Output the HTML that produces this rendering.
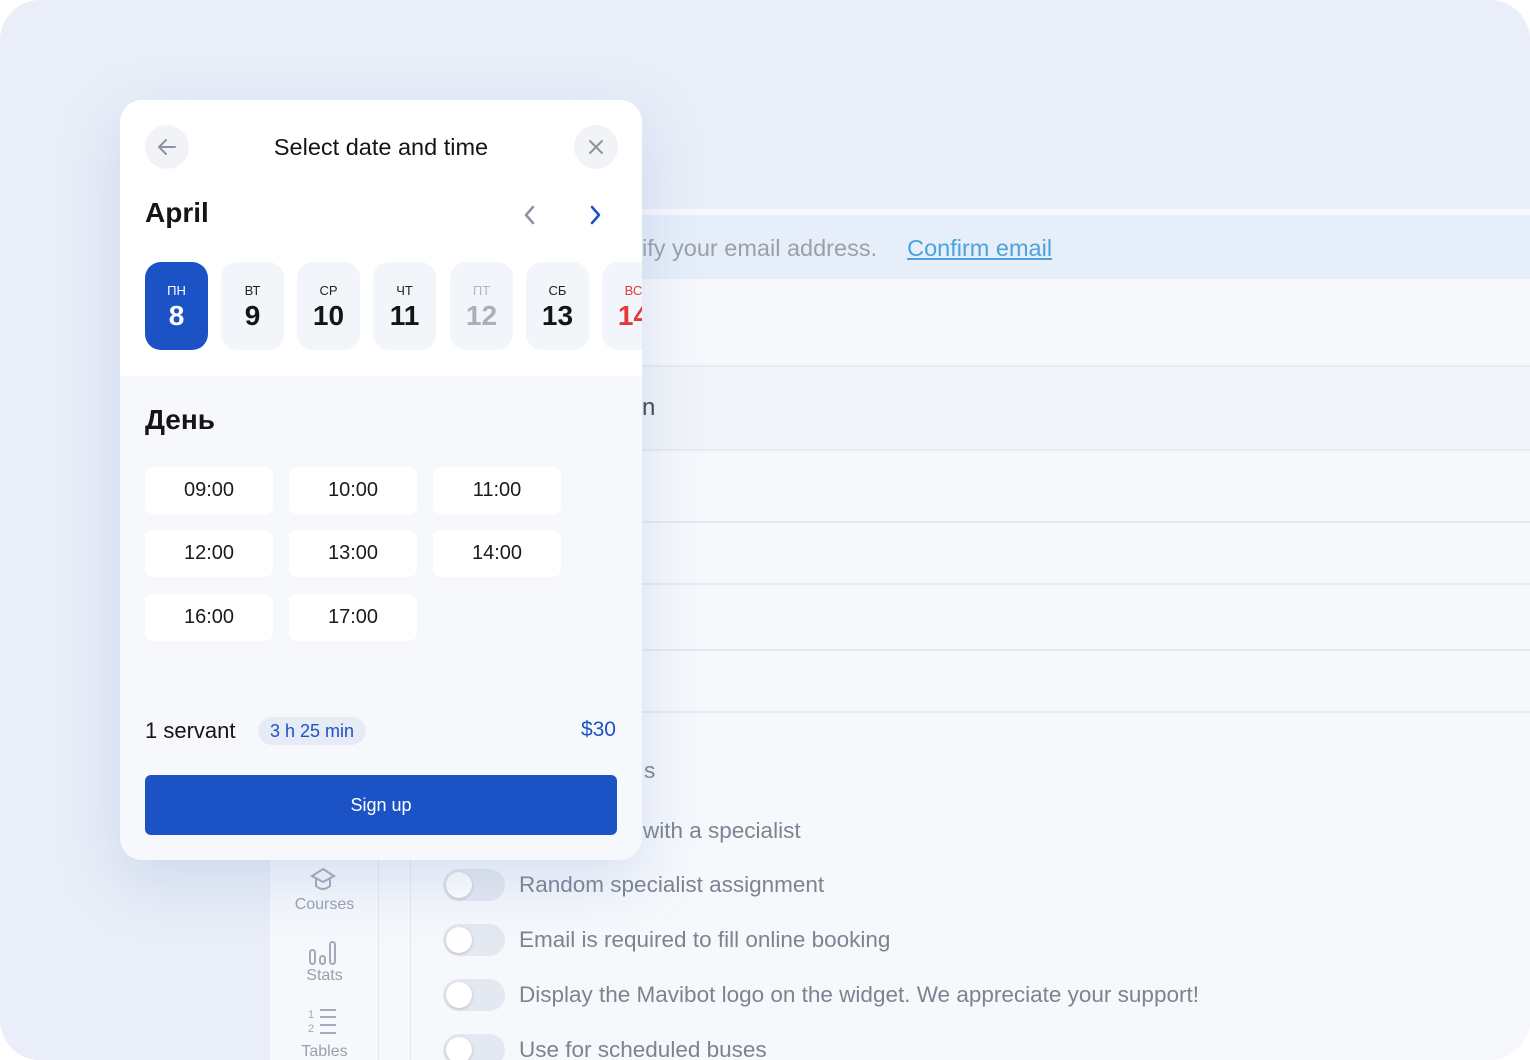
<!DOCTYPE html>
<html><head><meta charset="utf-8"><style>
*{box-sizing:border-box;margin:0;padding:0}
body{width:1530px;height:1060px;background:#fff;font-family:"Liberation Sans","DejaVu Sans",sans-serif;position:relative;overflow:hidden}
.outer{position:absolute;left:0;top:0;width:1530px;height:1060px;background:#e9eef8;border-radius:40px;overflow:hidden}
.abs{position:absolute}
.bg-main{left:411px;top:209px;width:1119px;height:851px;background:#f6f8fc}
.strip{left:642px;top:209px;width:888px;height:6px;background:#f7f9fd}
.banner{left:642px;top:215px;width:888px;height:64px;background:#e6eef9;color:#9aa0aa;font-size:23.5px;line-height:66px}
.banner a{color:#4aa3df;text-decoration:underline;margin-left:30px}
.hl{left:642px;height:2px;width:888px;background:#e6eaf1}
.side{left:270px;top:860px;width:109px;height:200px;background:#f6f8fc;border-right:1px solid #e3e7ee}
.side2{left:379px;top:860px;width:32px;height:200px;background:#f6f8fc;border-right:1px solid #e3e7ee}
.sl{color:#9aa0ad;font-size:16px;width:109px;text-align:center;left:270px}
.row{left:443px;font-size:22.5px;color:#7d8390}
.tog{left:443px;width:62px;height:32px;border-radius:16px;background:#e4e8f0}
.tog::after{content:"";position:absolute;left:3px;top:3px;width:26px;height:26px;border-radius:50%;background:#fff;box-shadow:0 1px 3px rgba(0,0,0,.2)}
.modal{left:120px;top:100px;width:522px;height:760px;background:#f6f8fb;border-radius:22px;overflow:hidden;box-shadow:0 20px 60px rgba(120,150,210,.25)}
.top{position:absolute;left:0;top:0;width:522px;height:276px;background:#fff}
.circ{position:absolute;width:44px;height:44px;border-radius:50%;background:#f1f3f7}
.day{position:absolute;top:162px;width:63px;height:88px;border-radius:16px;background:#f2f5fa;text-align:center}
.day .w{font-size:13px;margin-top:21px;color:#222}
.day .n{font-size:28px;font-weight:bold;margin-top:2px;color:#151515}
.slot{position:absolute;width:128px;height:47px;background:#fff;border-radius:8px;text-align:center;line-height:47px;font-size:20px;color:#1b1b1b}
</style></head><body>
<div class="outer">
<div class="abs bg-main"></div>
<div class="abs strip"></div>
<div class="abs banner"><span>ify your email address.</span><a>Confirm email</a></div>
<div class="abs" style="left:642px;top:366px;width:888px;height:84px;background:#f1f4f9"></div>
<div class="abs hl" style="top:365px"></div>
<div class="abs" style="left:642px;top:394px;font-size:24px;color:#444">n</div>
<div class="abs hl" style="top:449px"></div>
<div class="abs hl" style="top:521px"></div>
<div class="abs hl" style="top:583px"></div>
<div class="abs hl" style="top:649px"></div>
<div class="abs hl" style="top:711px"></div>
<div class="abs" style="left:644px;top:758px;font-size:22.5px;color:#7d8390">s</div>
<div class="abs" style="left:643px;top:818px;font-size:22.5px;color:#7d8390">with a specialist</div>
<div class="abs side"></div><div class="abs side2"></div>
<svg class="abs" style="left:309px;top:866px" width="28" height="28" viewBox="0 0 28 28" fill="none" stroke="#a3aabb" stroke-width="2"><path d="M14 3 L25 10 L14 16 L3 10 Z"/><path d="M7 12 V20 Q14 26 21 20 V12"/></svg>
<div class="abs sl" style="top:896px">Courses</div>
<svg class="abs" style="left:308px;top:940px" width="30" height="26" viewBox="0 0 30 26" fill="none" stroke="#a3aabb" stroke-width="2"><rect x="2" y="10" width="5" height="14" rx="2.5"/><rect x="12" y="16" width="5" height="8" rx="2.5"/><rect x="22" y="2" width="5" height="22" rx="2.5"/></svg>
<div class="abs sl" style="top:967px">Stats</div>
<div class="abs" style="left:308px;top:1008px;font-size:11px;color:#a3aabb;line-height:14px">1<br>2</div>
<svg class="abs" style="left:318px;top:1008px" width="20" height="30" viewBox="0 0 20 30" stroke="#a3aabb" stroke-width="2"><path d="M2 2H18M2 9H18M2 17H18M2 25H18"/></svg>
<div class="abs sl" style="top:1043px">Tables</div>
<div class="abs tog" style="top:869px"></div><div class="abs row" style="left:519px;top:872px">Random specialist assignment</div>
<div class="abs tog" style="top:924px"></div><div class="abs row" style="left:519px;top:927px">Email is required to fill online booking</div>
<div class="abs tog" style="top:979px"></div><div class="abs row" style="left:519px;top:982px">Display the Mavibot logo on the widget. We appreciate your support!</div>
<div class="abs tog" style="top:1034px"></div><div class="abs row" style="left:519px;top:1037px">Use for scheduled buses</div>

<div class="abs modal">
<div class="top"></div>
<div class="circ" style="left:25px;top:25px"></div>
<svg class="abs" style="left:36px;top:36px" width="22" height="22" viewBox="0 0 22 22" fill="none" stroke="#8d93a0" stroke-width="2" stroke-linecap="round" stroke-linejoin="round"><path d="M19 11H3M10 4L3 11L10 18"/></svg>
<div class="circ" style="left:454px;top:25px"></div>
<svg class="abs" style="left:467px;top:38px" width="18" height="18" viewBox="0 0 18 18" stroke="#8d93a0" stroke-width="2" stroke-linecap="round"><path d="M3 3L15 15M15 3L3 15"/></svg>
<div class="abs" style="left:0;width:522px;top:34px;text-align:center;font-size:23.5px;color:#151515">Select date and time</div>
<div class="abs" style="left:25px;top:97px;font-size:28px;font-weight:bold;color:#151515">April</div>
<svg class="abs" style="left:400px;top:104px" width="20" height="22" viewBox="0 0 20 22" fill="none" stroke="#8d93a0" stroke-width="2.5" stroke-linecap="round" stroke-linejoin="round"><path d="M13 3L6 11L13 19"/></svg>
<svg class="abs" style="left:465px;top:104px" width="20" height="22" viewBox="0 0 20 22" fill="none" stroke="#1a52c5" stroke-width="2.5" stroke-linecap="round" stroke-linejoin="round"><path d="M7 3L14 11L7 19"/></svg>
<div class="day" style="left:25px;background:#1b53c6"><div class="w" style="color:#fff">ПН</div><div class="n" style="color:#fff">8</div></div>
<div class="day" style="left:101px"><div class="w">ВТ</div><div class="n">9</div></div>
<div class="day" style="left:177px"><div class="w">СР</div><div class="n">10</div></div>
<div class="day" style="left:253px"><div class="w">ЧТ</div><div class="n">11</div></div>
<div class="day" style="left:330px"><div class="w" style="color:#b0b6c1">ПТ</div><div class="n" style="color:#a9afbb">12</div></div>
<div class="day" style="left:406px"><div class="w">СБ</div><div class="n">13</div></div>
<div class="day" style="left:482px"><div class="w" style="color:#e53935">ВС</div><div class="n" style="color:#e53935">14</div></div>
<div class="abs" style="left:25px;top:304px;font-size:28px;font-weight:bold;color:#151515">День</div>
<div class="slot" style="left:25px;top:367px">09:00</div>
<div class="slot" style="left:169px;top:367px">10:00</div>
<div class="slot" style="left:313px;top:367px">11:00</div>
<div class="slot" style="left:25px;top:430px">12:00</div>
<div class="slot" style="left:169px;top:430px">13:00</div>
<div class="slot" style="left:313px;top:430px">14:00</div>
<div class="slot" style="left:25px;top:494px">16:00</div>
<div class="slot" style="left:169px;top:494px">17:00</div>
<div class="abs" style="left:25px;top:618px;font-size:22px;color:#151515">1 servant</div>
<div class="abs" style="left:138px;top:617px;width:108px;height:28px;border-radius:14px;background:#e6ebf5;color:#1b53c6;font-size:18px;text-align:center;line-height:28px">3 h 25 min</div>
<div class="abs" style="left:440px;top:618px;width:56px;text-align:right;font-size:21px;color:#1b53c6">$30</div>
<div class="abs" style="left:25px;top:675px;width:472px;height:60px;border-radius:6px;background:#1b53c6;color:#fff;font-size:18px;text-align:center;line-height:60px">Sign up</div>
</div>
</div>
</body></html>
